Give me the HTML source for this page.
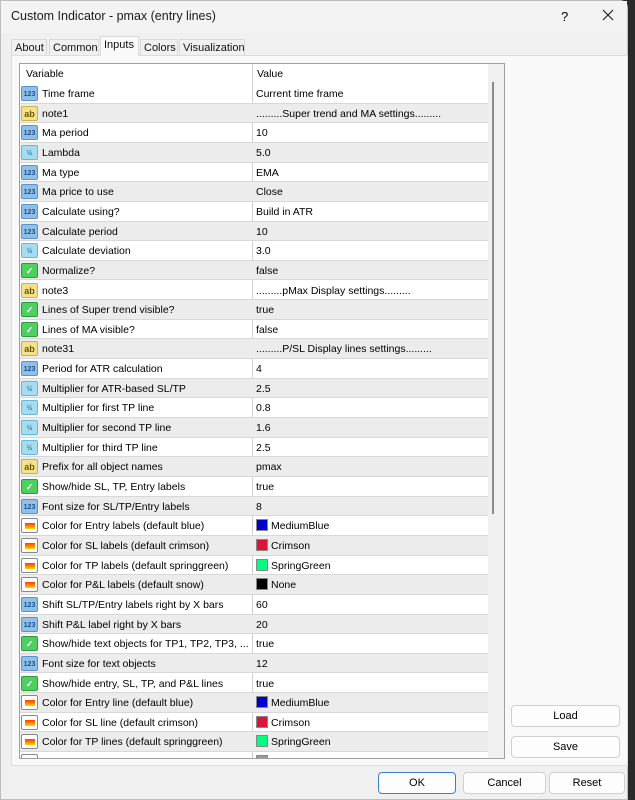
<!DOCTYPE html>
<html><head><meta charset="utf-8"><style>
*{box-sizing:border-box;margin:0;padding:0}
body{width:635px;height:800px;overflow:hidden;background:#2a2a2a;font-family:"Liberation Sans",sans-serif;font-size:11px;color:#000;position:relative}
#win{position:absolute;left:0;top:0;width:628px;height:800px;background:#f0f0f0;border:1px solid #bdbdbd;border-radius:0 8px 0 0}
#title{position:absolute;left:0;top:0;width:626px;height:32px;background:#f3f3f3}
#title .t{position:absolute;left:10px;top:8px;font-size:12.5px;color:#1a1a1a}
#title .q{position:absolute;left:560px;top:8px;font-size:13px}
#title .x{position:absolute;left:600px;top:7px;width:14px;height:14px}
.tab{position:absolute;top:38px;height:17px;border:1px solid #d9d9d9;border-bottom:none;background:#f0f0f0;font-size:11px;padding:2px 3px 0;color:#111}
.tab.on{top:35px;height:20px;background:#f9f9f9;z-index:2}
#panel{position:absolute;left:10px;top:54px;width:617px;height:711px;background:#f9f9f9;border:1px solid #dcdcdc}
#grid{position:absolute;left:18px;top:62px;width:486px;height:696px;background:#fff;border:1px solid #a0a0a0;overflow:hidden;font-size:10.5px}
#hdr{position:absolute;left:0;top:0;width:468px;height:20px;background:#fff}
#hdr div{position:absolute;top:4px}
.row{position:absolute;left:0;width:468px;height:19.65px;border-bottom:1px solid #d8d8d8}
.row.g{background:#ececec}
.row .n{position:absolute;left:22px;top:4px;white-space:nowrap}
.row .v{position:absolute;left:236px;top:4px;white-space:nowrap}
.row .vc{position:absolute;left:251px;top:4px;white-space:nowrap}
.row .sw{position:absolute;left:236px;top:3px;width:12px;height:12px;border:1px solid #888}
#colline{position:absolute;left:232px;top:0;width:1px;height:700px;background:#d0d0d0}
.ic{position:absolute;left:1px;top:2px;width:17px;height:15px;border-radius:2px;font-size:7px;font-weight:bold;text-align:center;line-height:15px}
.i{background:#8fc0ea;border:1px solid #5b93c9;color:#1d4f8c}
.a{background:#f3e28b;border:1px solid #c8b24a;color:#6b5500;font-size:9px}
.d{background:#a6dcef;border:1px solid #6bb6d6;color:#2a79a6}
.b{background:#4fcf5f;border:1px solid #2f9b3e;color:#fff;font-size:9px}
.c{background:#fff;border:1px solid #888}
.c::after{content:"";position:absolute;left:3px;top:4px;width:10px;height:6px;background:linear-gradient(#ff3a00,#ffd000);}
#sb{position:absolute;left:468px;top:0;width:16px;height:696px;background:#f0f0f0}
#sb::after{content:"";position:absolute;left:4px;top:18px;width:2px;height:432px;background:#8a8a8a}
.btn{position:absolute;height:22px;background:#fdfdfd;border:1px solid #d0d0d0;border-radius:4px;text-align:center;line-height:20px;font-size:11px}
</style></head><body>
<div id="win">
<div id="title"><span class="t">Custom Indicator - pmax (entry lines)</span><span class="q">?</span><svg class="x" viewBox="0 0 14 14"><path d="M2 2L12 12M12 2L2 12" stroke="#222" stroke-width="1.2"/></svg></div>
<div class="tab" style="left:10px;width:36px">About</div>
<div class="tab" style="left:48px;width:50px">Common</div>
<div class="tab on" style="left:99px;width:39px">Inputs</div>
<div class="tab" style="left:139px;width:38px">Colors</div>
<div class="tab" style="left:178px;width:66px">Visualization</div>
<div id="panel"></div>
<div id="grid">
<div id="hdr"><div style="left:6px">Variable</div><div style="left:237px">Value</div></div>
<div id="colline"></div>
<div class="row" style="top:20px"><span class="ic i">123</span><span class="n">Time frame</span><span class="v">Current time frame</span></div>
<div class="row g" style="top:39.65px"><span class="ic a">ab</span><span class="n">note1</span><span class="v">.........Super trend and MA settings.........</span></div>
<div class="row" style="top:59.3px"><span class="ic i">123</span><span class="n">Ma period</span><span class="v">10</span></div>
<div class="row g" style="top:78.95px"><span class="ic d">½</span><span class="n">Lambda</span><span class="v">5.0</span></div>
<div class="row" style="top:98.6px"><span class="ic i">123</span><span class="n">Ma type</span><span class="v">EMA</span></div>
<div class="row g" style="top:118.25px"><span class="ic i">123</span><span class="n">Ma price to use</span><span class="v">Close</span></div>
<div class="row" style="top:137.9px"><span class="ic i">123</span><span class="n">Calculate using?</span><span class="v">Build in ATR</span></div>
<div class="row g" style="top:157.55px"><span class="ic i">123</span><span class="n">Calculate period</span><span class="v">10</span></div>
<div class="row" style="top:177.2px"><span class="ic d">½</span><span class="n">Calculate deviation</span><span class="v">3.0</span></div>
<div class="row g" style="top:196.85px"><span class="ic b">✓</span><span class="n">Normalize?</span><span class="v">false</span></div>
<div class="row" style="top:216.5px"><span class="ic a">ab</span><span class="n">note3</span><span class="v">.........pMax Display settings.........</span></div>
<div class="row g" style="top:236.15px"><span class="ic b">✓</span><span class="n">Lines of Super trend visible?</span><span class="v">true</span></div>
<div class="row" style="top:255.8px"><span class="ic b">✓</span><span class="n">Lines of  MA visible?</span><span class="v">false</span></div>
<div class="row g" style="top:275.45px"><span class="ic a">ab</span><span class="n">note31</span><span class="v">.........P/SL Display  lines settings.........</span></div>
<div class="row" style="top:295.1px"><span class="ic i">123</span><span class="n">Period for ATR calculation</span><span class="v">4</span></div>
<div class="row g" style="top:314.75px"><span class="ic d">½</span><span class="n">Multiplier for ATR-based SL/TP</span><span class="v">2.5</span></div>
<div class="row" style="top:334.4px"><span class="ic d">½</span><span class="n">Multiplier for first TP line</span><span class="v">0.8</span></div>
<div class="row g" style="top:354.05px"><span class="ic d">½</span><span class="n">Multiplier for second TP line</span><span class="v">1.6</span></div>
<div class="row" style="top:373.7px"><span class="ic d">½</span><span class="n">Multiplier for third TP line</span><span class="v">2.5</span></div>
<div class="row g" style="top:393.35px"><span class="ic a">ab</span><span class="n">Prefix for all object names</span><span class="v">pmax</span></div>
<div class="row" style="top:413px"><span class="ic b">✓</span><span class="n">Show/hide SL, TP, Entry labels</span><span class="v">true</span></div>
<div class="row g" style="top:432.65px"><span class="ic i">123</span><span class="n">Font size for SL/TP/Entry labels</span><span class="v">8</span></div>
<div class="row" style="top:452.3px"><span class="ic c"></span><span class="n">Color for Entry labels (default blue)</span><span class="sw" style="background:#0000cd"></span><span class="vc">MediumBlue</span></div>
<div class="row g" style="top:471.95px"><span class="ic c"></span><span class="n">Color for SL labels (default crimson)</span><span class="sw" style="background:#dc143c"></span><span class="vc">Crimson</span></div>
<div class="row" style="top:491.6px"><span class="ic c"></span><span class="n">Color for TP labels (default springgreen)</span><span class="sw" style="background:#00ff7f"></span><span class="vc">SpringGreen</span></div>
<div class="row g" style="top:511.25px"><span class="ic c"></span><span class="n">Color for P&amp;L labels (default snow)</span><span class="sw" style="background:#000"></span><span class="vc">None</span></div>
<div class="row" style="top:530.9px"><span class="ic i">123</span><span class="n">Shift SL/TP/Entry labels right by X bars</span><span class="v">60</span></div>
<div class="row g" style="top:550.55px"><span class="ic i">123</span><span class="n">Shift P&amp;L label right by X bars</span><span class="v">20</span></div>
<div class="row" style="top:570.2px"><span class="ic b">✓</span><span class="n">Show/hide text objects for TP1, TP2, TP3, ...</span><span class="v">true</span></div>
<div class="row g" style="top:589.85px"><span class="ic i">123</span><span class="n">Font size for text objects</span><span class="v">12</span></div>
<div class="row" style="top:609.5px"><span class="ic b">✓</span><span class="n">Show/hide entry, SL, TP, and P&amp;L lines</span><span class="v">true</span></div>
<div class="row g" style="top:629.15px"><span class="ic c"></span><span class="n">Color for Entry line (default blue)</span><span class="sw" style="background:#0000cd"></span><span class="vc">MediumBlue</span></div>
<div class="row" style="top:648.8px"><span class="ic c"></span><span class="n">Color for SL line (default crimson)</span><span class="sw" style="background:#dc143c"></span><span class="vc">Crimson</span></div>
<div class="row g" style="top:668.45px"><span class="ic c"></span><span class="n">Color for TP lines (default springgreen)</span><span class="sw" style="background:#00ff7f"></span><span class="vc">SpringGreen</span></div>
<div class="row" style="top:688.1px"><span class="ic c"></span><span class="sw" style="background:#999"></span></div>
<div id="sb"></div>
</div>
<div class="btn" style="left:510px;top:704px;width:109px">Load</div>
<div class="btn" style="left:510px;top:735px;width:109px">Save</div>
<div class="btn" style="left:377px;top:771px;width:78px;border-color:#3b7fd0">OK</div>
<div class="btn" style="left:462px;top:771px;width:83px">Cancel</div>
<div class="btn" style="left:548px;top:771px;width:76px">Reset</div>
</div>
</body></html>
